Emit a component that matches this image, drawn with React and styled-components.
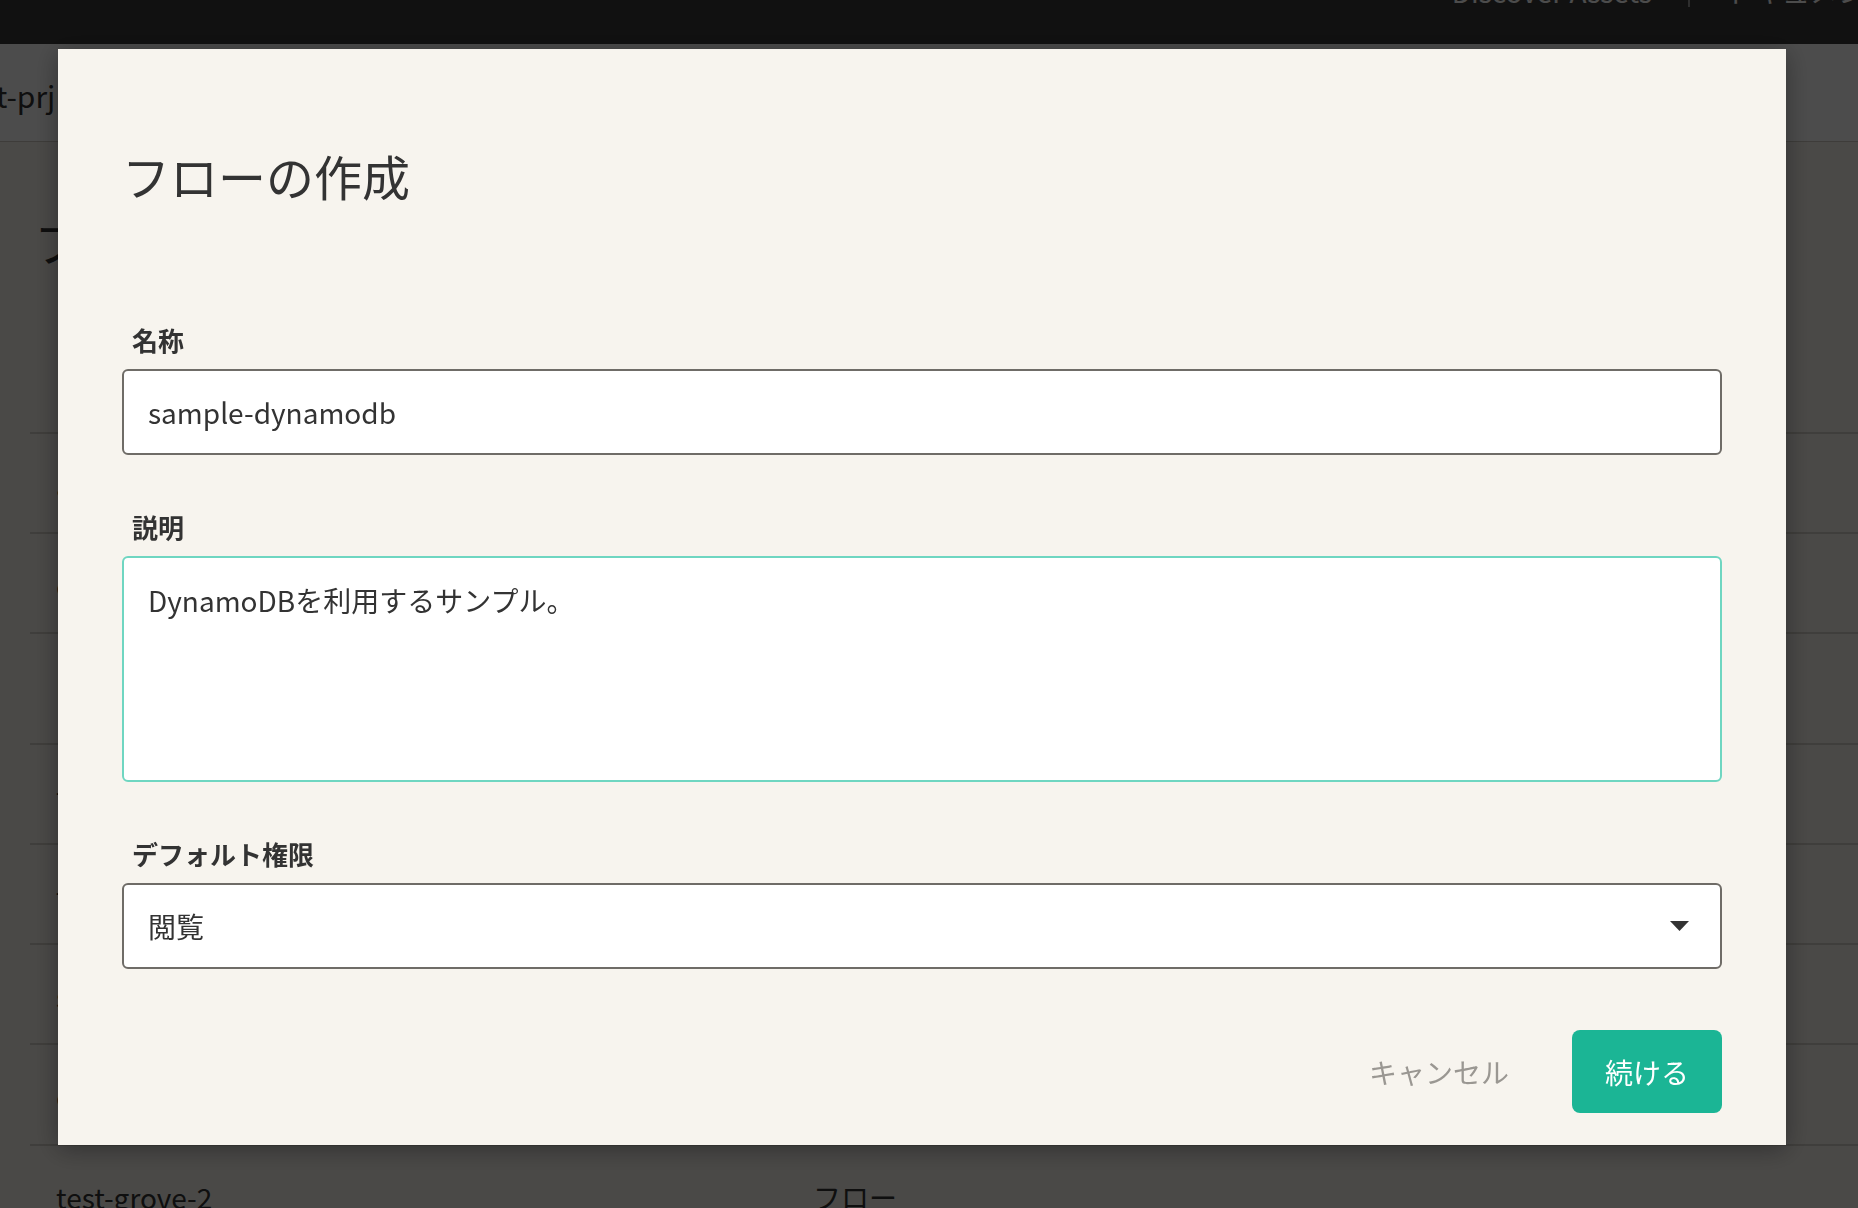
import React from "react";
import styled, { createGlobalStyle } from "styled-components";

const GlobalStyle = createGlobalStyle`
  html, body {
    margin: 0;
    padding: 0;
    background: #f7f4ee;
  }
  body {
    font-family: "Noto Sans CJK JP", "Noto Sans", sans-serif;
    color: #333;
    overflow: hidden;
  }
  * {
    box-sizing: border-box;
  }
`;

const rows = [
  { name: "aws-dynamodb-sample", height: 100 },
  { name: "csv-import-flow", height: 100 },
  { name: "lambda-sample", height: 111 },
  { name: "flow-test", height: 100 },
  { name: "test-flow-1", height: 100 },
  { name: "sample-s3", height: 100 },
  { name: "csv-export", height: 101 },
  { name: "test-grove-2", height: 100 },
];

const App = () => {
  return (
    <>
      <GlobalStyle />
      <Page>
        <TopBar>
          <TopNav>
            <TopLink>Discover Assets</TopLink>
            <TopDivider />
            <TopLink>ドキュメント</TopLink>
          </TopNav>
        </TopBar>
        <SubBar>
          <Crumb>t-prj</Crumb>
        </SubBar>
        <Content>
          <Heading>フロー</Heading>
          <Table>
            {rows.map((row) => (
              <Row key={row.name} $height={row.height}>
                <NameCell>{row.name}</NameCell>
                <TypeCell>フロー</TypeCell>
              </Row>
            ))}
          </Table>
        </Content>

        <Overlay>
          <Modal>
            <Title>フローの作成</Title>
            <Field>
              <Label>名称</Label>
              <TextInput defaultValue="sample-dynamodb" />
            </Field>
            <Field>
              <Label>説明</Label>
              <TextArea defaultValue="DynamoDBを利用するサンプル。" />
            </Field>
            <Field>
              <Label>デフォルト権限</Label>
              <SelectBox>
                <span>閲覧</span>
                <svg width="19" height="10" viewBox="0 0 19 10">
                  <path d="M0 0 H19 L9.5 10 Z" fill="#333" />
                </svg>
              </SelectBox>
            </Field>
            <Actions>
              <CancelButton>キャンセル</CancelButton>
              <PrimaryButton>続ける</PrimaryButton>
            </Actions>
          </Modal>
        </Overlay>
      </Page>
    </>
  );
};

export default App;

const Page = styled.div`
  position: relative;
  width: 100vw;
  height: 100vh;
  overflow: hidden;
  background: #f7f4ee;
`;

const TopBar = styled.header`
  height: 44px;
  background: #3a3a3a;
  display: flex;
  justify-content: flex-end;
  align-items: flex-start;
  overflow: hidden;
`;

const TopNav = styled.nav`
  display: flex;
  align-items: flex-start;
  gap: 36px;
  margin-top: -23px;
  margin-right: -36px;
`;

const TopLink = styled.span`
  font-size: 28px;
  line-height: 28px;
  color: #fff;
  white-space: nowrap;
`;

const TopDivider = styled.span`
  width: 2px;
  height: 30px;
  background: #9a9a9a;
`;

const SubBar = styled.div`
  height: 98px;
  background: #fff;
  border-bottom: 1px solid #cfcac2;
  display: flex;
  align-items: center;
  padding-top: 4px;
`;

const Crumb = styled.span`
  font-size: 30px;
  color: #333;
  margin-left: -4px;
`;

const Content = styled.main`
  padding: 63px 0 0 30px;
`;

const Heading = styled.h1`
  margin: 0 0 155px;
  padding-left: 4px;
  font-size: 48px;
  line-height: 72px;
  font-weight: 400;
  color: #333;
`;

const Table = styled.div`
  display: flex;
  flex-direction: column;
`;

const Row = styled.div`
  height: ${(p) => p.$height}px;
  border-top: 2px solid #d4d0c8;
  display: flex;
  align-items: center;
  padding: 3px 0 0 26px;
  font-size: 28px;
  color: #333;
`;

const NameCell = styled.div`
  width: 757px;
`;

const TypeCell = styled.div``;

const Overlay = styled.div`
  position: fixed;
  inset: 0;
  background: rgba(0, 0, 0, 0.7);
  padding: 49px 0 0 58px;
`;

const Modal = styled.section`
  width: 1728px;
  background: #f7f4ee;
  padding: 90px 64px 32px;
  box-shadow: 0 4px 24px rgba(0, 0, 0, 0.35);
  display: flex;
  flex-direction: column;
`;

const Title = styled.h2`
  margin: 0 0 57px;
  font-size: 48px;
  line-height: 72px;
  font-weight: 400;
  color: #333;
`;

const Field = styled.div`
  display: flex;
  flex-direction: column;
  gap: 12px;
  margin-top: 54px;
`;

const Label = styled.label`
  padding-left: 10px;
  font-size: 26px;
  line-height: 35px;
  font-weight: 700;
  color: #333;
`;

const fieldBase = `
  width: 100%;
  background: #fff;
  border-radius: 6px;
  font-family: "Noto Sans CJK JP", "Noto Sans", sans-serif;
  font-size: 28px;
  color: #333;
  outline: none;
`;

const TextInput = styled.input`
  ${fieldBase}
  height: 86px;
  border: 2px solid #6f6c67;
  padding: 0 24px;
`;

const TextArea = styled.textarea`
  ${fieldBase}
  height: 226px;
  border: 2px solid #6fd6c1;
  padding: 21px 24px;
  line-height: 42px;
  resize: none;
`;

const SelectBox = styled.div`
  ${fieldBase}
  height: 86px;
  border: 2px solid #6f6c67;
  padding: 0 31px 0 24px;
  display: flex;
  align-items: center;
  justify-content: space-between;
`;

const Actions = styled.div`
  display: flex;
  justify-content: flex-end;
  align-items: center;
  gap: 30px;
  margin-top: 61px;
`;

const ButtonBase = styled.button`
  height: 83px;
  padding: 0 33px;
  border: none;
  border-radius: 8px;
  font-family: "Noto Sans CJK JP", "Noto Sans", sans-serif;
  font-size: 28px;
  cursor: pointer;
`;

const CancelButton = styled(ButtonBase)`
  background: transparent;
  color: #9a9792;
`;

const PrimaryButton = styled(ButtonBase)`
  background: #1bb595;
  color: #fff;
`;
